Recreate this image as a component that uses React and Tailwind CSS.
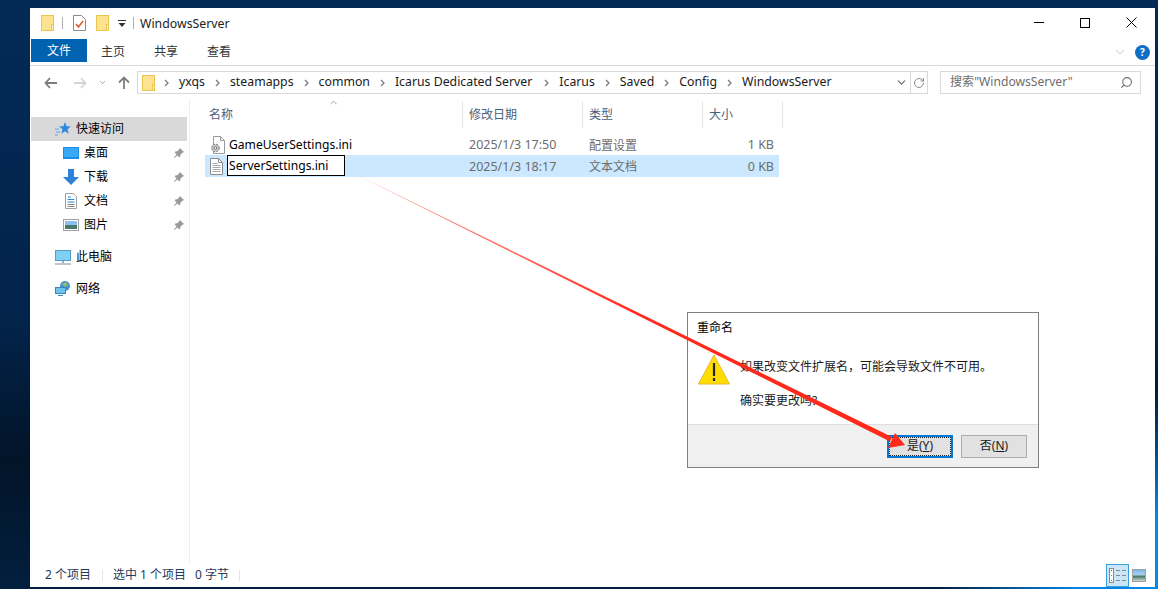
import React from "react";
import { ChevronDown, ChevronUp, RotateCw, Search } from "lucide-react";

const FONT = "[font-family:'Noto_Sans','Noto_Sans_CJK_SC',sans-serif]";

const Folder = ({ className = "" }) => (
  <svg width="13" height="16" viewBox="0 0 13 16" className={className}>
    <rect x="0.5" y="0.5" width="12" height="15" fill="#fde28f" stroke="#eac451" />
    <rect x="10.5" y="9.5" width="2" height="6" fill="#fff2c4" stroke="#eac451" />
  </svg>
);

const Pin = () => (
  <svg width="12" height="12" viewBox="0 0 12 12">
    <path d="M7 1l4 4-1.2.5-2.3 2.3-.3 2-1.2.4-1.6-1.7L1.500 11 1 10.500l2.500-3.100-1.700-1.600.4-1.200 2-.3L6.500 2z" fill="#9a9a9a" />
  </svg>
);

const Gear = () => (
  <svg width="16" height="18" viewBox="0 0 16 18" className="shrink-0">
    <path d="M3.500.5h7l4 4v13h-11z" fill="#fff" stroke="#9a9a9a" />
    <path d="M10.500.5v4h4" fill="none" stroke="#9a9a9a" />
    <circle cx="5.500" cy="12" r="3.800" fill="#c8c8c8" stroke="#777" strokeDasharray="2 1" />
    <circle cx="5.500" cy="12" r="1.300" fill="#fff" stroke="#777" />
  </svg>
);

const TextDoc = () => (
  <svg width="13" height="17" viewBox="0 0 13 17" className="shrink-0">
    <path d="M.5.500h8l4 4v12H.5z" fill="#fff" stroke="#8c8c8c" />
    <path d="M8.500.5v4h4" fill="none" stroke="#8c8c8c" />
    <path d="M2.500 5.500h5M2.500 7.500h8M2.500 9.500h8M2.500 11.500h8M2.500 13.500h8" stroke="#a8a8a8" />
  </svg>
);

const QuickStar = () => (
  <svg width="16" height="15" viewBox="0 0 16 15">
    <path d="M10 0l1.600 4.300 4.400.2-3.500 2.800 1.200 4.500L10 9.200l-3.700 2.600 1.200-4.500L4 4.500l4.400-.2z" fill="#2a8ae0" />
    <path d="M0 7h4M1 10h4M0 13h3" stroke="#5aa8ea" />
  </svg>
);

const NavRow = ({ icon, label, pinned, indent, selected, className = "" }) => (
  <div className={`flex items-center h-6 mx-px w-[156px] ${selected ? "bg-[#d9d9d9]" : ""} ${indent ? "pl-[32px]" : "pl-[24px]"} ${className}`}>
    <span className="w-4 h-4 flex items-center justify-center shrink-0">{icon}</span>
    <span className="ml-[5px] text-[12px] text-black">{label}</span>
    {pinned && <span className="ml-auto mr-[2px]"><Pin /></span>}
  </div>
);

const Crumb = ({ label, className = "" }) => (
  <span className={`flex items-center ${className}`}>
    <svg width="5" height="8" viewBox="0 0 5 8" className="mx-[10px]">
      <path d="M1 1l3 3-3 3" fill="none" stroke="#7a7a7a" strokeWidth="1.300" />
    </svg>
    <span className="text-[12.300px] text-[#1a1a1a]">{label}</span>
  </span>
);

const HeadCell = ({ label, width, className = "pl-[6px]" }) => (
  <div className={`${width} ${className} h-full border-r border-[#e5e5e5] flex items-center text-[12px] text-[#4c607a]`}>{label}</div>
);

const FileRow = ({ icon, name, date, kind, size, selected }) => (
  <div className={`flex items-center ml-[15px] w-[574px] ${selected ? "h-[22px] bg-[#cce8ff]" : "h-[21px]"} text-[12px] text-[#6d6d6d]`}>
    <span className="w-[22px] pl-[5px] flex items-center shrink-0">{icon}</span>
    <span className="w-[236px] shrink-0 flex items-center">
      {selected ? (
        <span className="w-[118px] h-[21px] border border-black bg-white pl-[1px] pt-[1px] text-[12.100px] text-black flex items-center -mt-px">{name}</span>
      ) : (
        <span className="pl-[2px] pt-[2px] text-[12.100px] text-black">{name}</span>
      )}
    </span>
    <span className="w-[120px] shrink-0 pl-[6px] pt-[2px] text-[12.500px]">{date}</span>
    <span className="w-[120px] shrink-0 pl-[6px] pt-[2px]">{kind}</span>
    <span className="flex-1 text-right pr-[5px] pt-[2px] text-[12.500px]">{size}</span>
  </div>
);

export default function App() {
  return (
    <div className={`relative w-[1158px] h-[589px] overflow-hidden pl-[30px] pt-[8px] ${FONT} bg-[radial-gradient(ellipse_220px_200px_at_100%_100%,#0588ea_0%,#0588ea_35%,transparent_100%),linear-gradient(to_bottom,#032a55_0%,#02234a_55%,#021428_78%,#021f3e_100%)]`}>
      {/* explorer window */}
      <div className="w-[1125px] h-[579px] bg-white flex flex-col">
        {/* title bar */}
        <div className="h-[31px] pb-[2px] flex items-center shrink-0">
          <Folder className="ml-[11px]" />
          <span className="ml-[8px] w-px h-3 bg-[#b0b0b0]" />
          <svg width="13" height="16" viewBox="0 0 13 16" className="ml-[10px]">
            <path d="M.5.500h8l4 4v11H.5z" fill="#fff" stroke="#8a8a8a" />
            <path d="M3 9l2.500 3L10 6" fill="none" stroke="#e0592a" strokeWidth="1.500" />
          </svg>
          <Folder className="ml-[10px]" />
          <svg width="8" height="8" viewBox="0 0 8 8" className="ml-[9px] mt-[3px]">
            <path d="M0 .5h8" stroke="#333" />
            <path d="M.5 3h7L4 7z" fill="#333" />
          </svg>
          <span className="ml-[7px] w-px h-3 bg-[#b0b0b0]" />
          <span className="ml-[6px] mt-[3px] text-[12.300px] text-[#222]">WindowsServer</span>
          <div className="ml-auto flex items-center mr-[1px]">
            <span className="w-[46px] h-[30px] flex items-center justify-center">
              <span className="w-[10px] h-px bg-black" />
            </span>
            <span className="w-[46px] h-[30px] flex items-center justify-center">
              <span className="w-[10px] h-[10px] border border-black" />
            </span>
            <span className="w-[46px] h-[30px] flex items-center justify-center">
              <svg width="11" height="11" viewBox="0 0 11 11"><path d="M.5.500l10 10M10.500.500l-10 10" stroke="#000" /></svg>
            </span>
          </div>
        </div>

        {/* ribbon tabs */}
        <div className="h-[27px] shrink-0 flex border-b border-[#dadada] pl-px">
          <div className="w-[56px] h-[23px] bg-[#0063b1] text-white text-[12px] flex items-center justify-center">文件</div>
          <div className="h-[23px] pt-[2px] flex items-center text-[12px] text-[#333]">
            <span className="ml-[14px]">主页</span>
            <span className="ml-[29px]">共享</span>
            <span className="ml-[29px]">查看</span>
          </div>
          <div className="ml-auto flex items-start pt-[6px] pr-[5px]">
            <ChevronDown size={14} strokeWidth={1} className="text-[#9a9a9a] mr-[8px]" />
            <span className="w-[15px] h-[15px] rounded-full bg-[#0f6fc6] text-white text-[10px] font-bold flex items-center justify-center">?</span>
          </div>
        </div>

        {/* address row */}
        <div className="h-[33px] shrink-0 flex items-center">
          <svg width="13" height="12" viewBox="0 0 13 12" className="ml-[14px]">
            <path d="M6 1L1.500 6 6 11M2 6h11" fill="none" stroke="#7d7d7d" strokeWidth="1.800" />
          </svg>
          <svg width="13" height="12" viewBox="0 0 13 12" className="ml-[17px]">
            <path d="M7 1l4.500 5L7 11M11 6H0" fill="none" stroke="#d4d4d4" strokeWidth="1.800" />
          </svg>
          <ChevronDown size={9} strokeWidth={2} className="ml-[11px] text-[#8a8a8a]" />
          <svg width="12" height="13" viewBox="0 0 12 13" className="ml-[11px]">
            <path d="M1 6.500L6 1.500l5 5M6 2v11" fill="none" stroke="#7d7d7d" strokeWidth="1.800" />
          </svg>
          <div className="ml-[7px] w-[791px] h-[23px] border border-[#d9d9d9] flex items-center">
            <Folder className="ml-[4px]" />
            <Crumb label="yxqs" className="ml-[-1px]" />
            <Crumb label="steamapps" />
            <Crumb label="common" />
            <Crumb label="Icarus Dedicated Server" />
            <Crumb label="Icarus" className="ml-[2px]" />
            <Crumb label="Saved" />
            <Crumb label="Config" />
            <Crumb label="WindowsServer" />
            <ChevronDown size={13} strokeWidth={2} className="ml-auto mr-[2px] text-[#666]" />
            <span className="w-[17px] h-full border-l border-[#d9d9d9] flex items-center justify-center">
              <RotateCw size={12} strokeWidth={2} className="text-[#8a8a8a]" />
            </span>
          </div>
          <div className="ml-[12px] w-[201px] h-[23px] border border-[#d9d9d9] flex items-center pl-[9px] pr-[7px] text-[12.100px] text-[#6d6d6d]">
            搜索"WindowsServer"
            <Search size={13} strokeWidth={2} className="ml-auto text-[#6d6d6d] -scale-x-100" />
          </div>
        </div>

        {/* body */}
        <div className="flex-1 min-h-0 flex">
          <aside className="w-[160px] shrink-0 border-r border-[#f0f0f0] pt-[18px]">
            <NavRow selected label="快速访问" icon={<QuickStar />} />
            <NavRow indent pinned label="桌面" icon={
              <svg width="16" height="13" viewBox="0 0 16 13">
                <rect width="16" height="12" fill="#1a8ee8" />
                <rect x="1" y="1" width="14" height="9" fill="#38a9f5" />
              </svg>} />
            <NavRow indent pinned label="下载" icon={
              <svg width="16" height="16" viewBox="0 0 16 16">
                <path d="M5 0h6v8h5l-8 8-8-8h5z" fill="#2f80d8" />
              </svg>} />
            <NavRow indent pinned label="文档" icon={
              <svg width="12" height="16" viewBox="0 0 12 16">
                <path d="M.5.500h8l3 3v12H.5z" fill="#fff" stroke="#a0a0a0" />
                <path d="M3 4h3M2.500 6.500h7M2.500 9h7" stroke="#2f88d8" />
                <path d="M2.500 11.500h7M2.500 13.500h7" stroke="#888" />
              </svg>} />
            <NavRow indent pinned label="图片" icon={
              <svg width="16" height="12" viewBox="0 0 16 12">
                <rect x=".5" y=".5" width="15" height="11" fill="#fff" stroke="#a0a0a0" />
                <rect x="2" y="2" width="12" height="4" fill="#8cc0ee" />
                <rect x="2" y="6" width="12" height="4" fill="#4c7a68" />
              </svg>} />
            <NavRow className="mt-[8px]" label="此电脑" icon={
              <svg width="16" height="15" viewBox="0 0 16 15">
                <rect x=".5" y=".5" width="15" height="10" fill="#7fd0f5" stroke="#5a9cc8" />
                <path d="M7 11h2v2H7z" fill="#9ab0c0" />
                <path d="M0 14h16" stroke="#a0b4c4" strokeWidth="1.500" />
              </svg>} />
            <NavRow className="mt-[8px]" label="网络" icon={
              <svg width="16" height="16" viewBox="0 0 16 16">
                <circle cx="10" cy="5" r="5" fill="#4a90d0" />
                <path d="M7 3l4-2 2 3-3 2z" fill="#8ac070" />
                <rect x=".5" y="6.500" width="10" height="6" fill="#6cc4ee" stroke="#3d86b8" />
                <path d="M3 14.500h5" stroke="#3d86b8" />
              </svg>} />
          </aside>

          <main className="relative flex-1">
            <ChevronUp size={11} strokeWidth={1.500} className="absolute left-[138px] -top-[2px] text-[#777]" />
            <div className="h-[27px] mt-[2px] flex ml-[12px]">
              <HeadCell label="名称" width="w-[261px]" className="pl-[7px]" />
              <HeadCell label="修改日期" width="w-[120px]" />
              <HeadCell label="类型" width="w-[120px]" />
              <HeadCell label="大小" width="w-[80px]" />
            </div>
            <div className="mt-[6px]">
              <FileRow icon={<Gear />} name="GameUserSettings.ini" date="2025/1/3 17:50" kind="配置设置" size="1 KB" />
              <FileRow selected icon={<TextDoc />} name="ServerSettings.ini" date="2025/1/3 18:17" kind="文本文档" size="0 KB" />
            </div>
          </main>
        </div>

        {/* status bar */}
        <div className="h-[24px] shrink-0 flex items-center text-[12px] text-[#1e395b] pl-[15px]">
          <span>2 个项目</span>
          <span className="ml-[11px] w-px h-[11px] bg-[#e5e5e5]" />
          <span className="ml-[10px]">选中 1 个项目</span>
          <span className="ml-[9px]">0 字节</span>
          <span className="ml-[10px] w-px h-[11px] bg-[#e5e5e5]" />
          <span className="ml-auto w-[23px] h-[23px] border border-[#3aa0dc] bg-[#cde6f7] flex items-center justify-center">
            <svg width="17" height="15" viewBox="0 0 17 15">
              <rect x=".5" y=".5" width="4" height="14" fill="#fff" stroke="#8a8a8a" />
              <path d="M2 2.500h1" stroke="#555" />
              <path d="M2 7.500h1" stroke="#3a8ae0" />
              <path d="M2 12.500h1" stroke="#e03030" />
              <path d="M7 2.500h4M13 2.500h4M7 7.500h4M13 7.500h4M7 12.500h4M13 12.500h4" stroke="#7a8a90" />
            </svg>
          </span>
          <span className="ml-[3px] mr-[9px] w-[14px] h-[13px] border border-[#a0a0a0] bg-[linear-gradient(to_bottom,#7fb8ee_0%,#a8d0f0_40%,#4c7a68_60%,#d0d8d8_100%)]" />
        </div>
      </div>

      {/* rename dialog */}
      <div className="absolute left-[687px] top-[312px] w-[352px] h-[156px] border border-[#7f7f7f] bg-white flex flex-col">
        <div className="h-[29px] pl-[9px] pt-[6px] text-[12px] text-black">重命名</div>
        <div className="flex-1 flex pl-[10px] pt-[12px]">
          <svg width="32" height="31" viewBox="0 0 32 31" className="shrink-0">
            <path d="M16 1l15.500 29H.5z" fill="#ffdd00" stroke="#e8b830" />
            <path d="M16 9v13" stroke="#222" strokeWidth="2.200" />
            <path d="M16 24v3" stroke="#222" strokeWidth="2.200" />
          </svg>
          <div className="ml-[10px] text-[12px] text-[#1a1a1a]">
            <p className="mt-[4px]">如果改变文件扩展名，可能会导致文件不可用。</p>
            <p className="mt-[16px]">确实要更改吗?</p>
          </div>
        </div>
        <div className="h-[43px] shrink-0 bg-[#f0f0f0] border-t border-[#dfdfdf] flex items-center justify-end pr-[11px] gap-[8px]">
          <button className="w-[66px] h-[23px] border-2 border-[#0078d7] bg-[#e1e1e1] outline-1 outline-dotted -outline-offset-3 outline-[#222] text-[12px] text-[#1a1a1a]">是(<span className="underline">Y</span>)</button>
          <button className="w-[66px] h-[23px] border border-[#adadad] bg-[#e1e1e1] text-[12px] text-[#1a1a1a]">否(<span className="underline">N</span>)</button>
        </div>
      </div>

      {/* red annotation arrow */}
      <svg width="1158" height="589" viewBox="0 0 1158 589" className="absolute left-0 top-0 pointer-events-none">
        <defs>
          <linearGradient id="arrowFade" gradientUnits="userSpaceOnUse" x1="347" y1="170" x2="640" y2="314">
            <stop offset="0" stopColor="#ffb0a8" />
            <stop offset="1" stopColor="#ff2a1c" />
          </linearGradient>
        </defs>
        <path d="M347 170L892 437 890 441.500z" fill="url(#arrowFade)" />
        <path d="M905 445L895 433 888 448z" fill="#ff2a1c" />
      </svg>
    </div>
  );
}
